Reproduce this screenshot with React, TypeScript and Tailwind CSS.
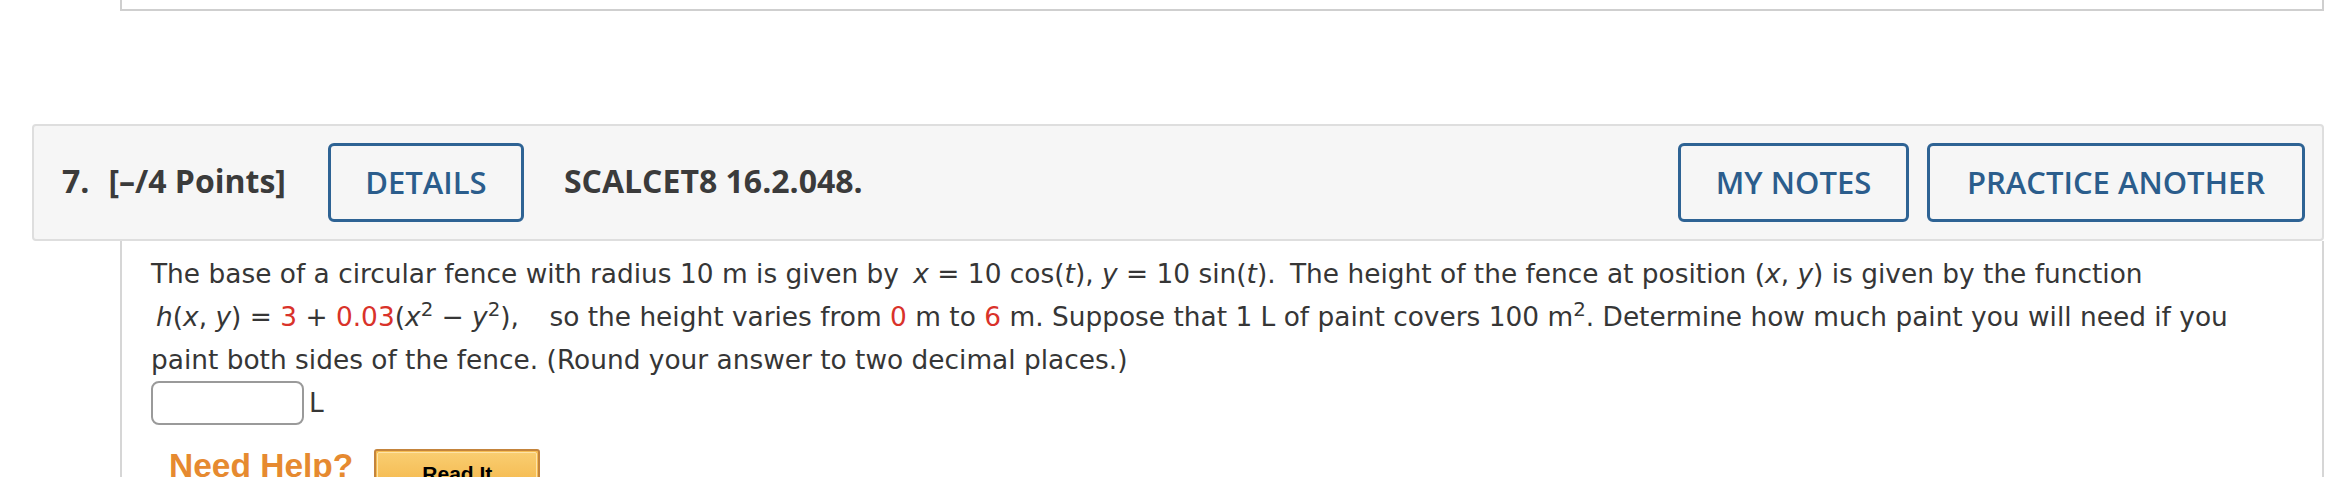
import React from 'react';

function HeaderButton({ width, className = '', children }: { width: string; className?: string; children: React.ReactNode }) {
  return (
    <div
      className={`${width} ${className} flex h-[79px] shrink-0 items-center justify-center rounded-[6px] border-[3px] border-[#2e6394] text-[31px] font-semibold leading-none text-[#2b5d8c]`}
    >
      {children}
    </div>
  );
}

function V({ children }: { children: React.ReactNode }) {
  return <i className="italic">{children}</i>;
}

function Red({ children }: { children: React.ReactNode }) {
  return <span className="text-[#d9322a]">{children}</span>;
}

export default function App() {
  return (
    <div className="h-[477px] w-[2328px] overflow-hidden bg-white pl-[32px] pr-[4px]">
      {/* bottom of the previous question */}
      <div className="ml-[88px] h-[11px] border-x-2 border-b-2 border-[#cfcfcf]" />

      {/* question header */}
      <div className="mt-[113px] flex items-center rounded-[4px] border-2 border-[#dedede] bg-[#f6f6f6] py-[17px] pl-[28px] pr-[17px] font-['Open_Sans',sans-serif] text-[#3b3b3b]">
        <div className="mb-[4px] flex items-center text-[32px] font-bold leading-none">
          <span>7.</span>
          <span className="ml-[19px]">[–/4 Points]</span>
        </div>
        <HeaderButton width="w-[196px]" className="ml-[42px]">
          DETAILS
        </HeaderButton>
        <span className="mb-[4px] ml-[40px] text-[32px] font-bold leading-none">SCALCET8 16.2.048.</span>
        <div className="flex-1" />
        <HeaderButton width="w-[231px]">MY NOTES</HeaderButton>
        <HeaderButton width="w-[378px]" className="ml-[18px]">
          PRACTICE ANOTHER
        </HeaderButton>
      </div>

      {/* question body */}
      <div className="ml-[88px] h-[300px] border-x-2 border-[#d6d6d6] pl-[29px] pt-[11px] font-['DejaVu_Sans',sans-serif] text-[26.4px] text-[#363636]">
        <p className="whitespace-nowrap leading-[43px]">
          The base of a circular fence with radius 10 m is given by{' '}
          <span className="ml-[6px]">
            <V>x</V> = 10 cos(<V>t</V>), <V>y</V> = 10 sin(<V>t</V>).
          </span>{' '}
          <span className="ml-[6px]">The height of the fence at position (</span>
          <V>x</V>, <V>y</V>) is given by the function
          <br />
          <span className="ml-[5px]">
            <V>h</V>(<V>x</V>, <V>y</V>) = <Red>3</Red> + <Red>0.03</Red>(<V>x</V>
            <sup>2</sup> − <V>y</V>
            <sup>2</sup>),
          </span>{' '}
          <span className="ml-[22px]">so the height varies from </span>
          <Red>0</Red> m to <Red>6</Red> m. Suppose that 1 L of paint covers 100 m<sup>2</sup>. Determine how much
          paint you will need if you
          <br />
          paint both sides of the fence. (Round your answer to two decimal places.)
        </p>

        <div className="flex items-center">
          <input
            type="text"
            className="h-[44px] w-[153px] rounded-[8px] border-2 border-[#9a9a9a] bg-white outline-none"
          />
          <span className="ml-[5px] leading-none">L</span>
        </div>

        <div className="mt-[24px] flex items-start font-['Liberation_Sans',Arial,sans-serif]">
          <span className="ml-[18px] text-[33.5px] font-bold leading-none text-[#e68a30]">Need Help?</span>
          <div className="ml-[21px] h-[50px] w-[166px] rounded-[3px] border-2 border-[#c4843c] bg-[#f6bd52] p-[1px]">
            <div className="flex h-full justify-center rounded-[2px] border border-[#fde3a8] bg-linear-to-b from-[#f9cd70] to-[#f3b340] pt-[9px] text-[21px] font-bold leading-[24px] text-black">
              Read It
            </div>
          </div>
        </div>
      </div>
    </div>
  );
}
